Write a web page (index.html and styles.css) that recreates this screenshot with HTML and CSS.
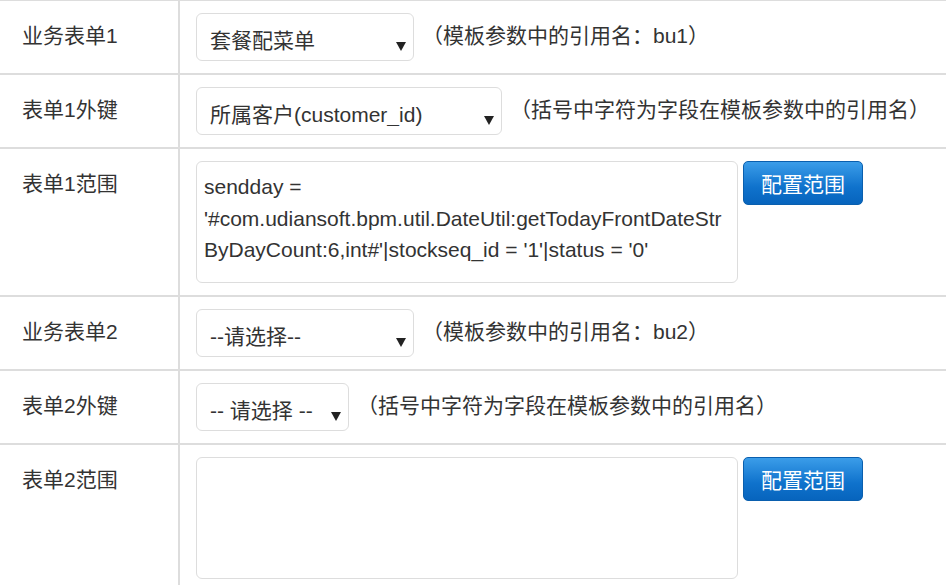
FILE: index.html
```html
<!DOCTYPE html>
<html lang="zh-CN">
<head>
  <meta charset="UTF-8">
  <title>业务表单配置</title>
  <link rel="stylesheet" href="styles.css">
</head>
<body>
  <table class="form-table">
    <tr>
      <td class="label">业务表单1</td>
      <td class="field">
        <div class="field-row">
          <span class="select-wrap w-short">
            <select class="select"><option>套餐配菜单</option></select>
          </span>
          <span class="hint">（模板参数中的引用名：bu1）</span>
        </div>
      </td>
    </tr>
    <tr>
      <td class="label">表单1外键</td>
      <td class="field">
        <div class="field-row">
          <span class="select-wrap w-long">
            <select class="select"><option>所属客户(customer_id)</option></select>
          </span>
          <span class="hint">（括号中字符为字段在模板参数中的引用名）</span>
        </div>
      </td>
    </tr>
    <tr>
      <td class="label">表单1范围</td>
      <td class="field">
        <div class="field-row top">
          <textarea class="range" readonly>sendday = '#com.udiansoft.bpm.util.DateUtil:getTodayFrontDateStrByDayCount:6,int#'|stockseq_id = '1'|status = '0'</textarea>
          <button class="btn">配置范围</button>
        </div>
      </td>
    </tr>
    <tr>
      <td class="label">业务表单2</td>
      <td class="field">
        <div class="field-row">
          <span class="select-wrap w-short">
            <select class="select"><option>--请选择--</option></select>
          </span>
          <span class="hint">（模板参数中的引用名：bu2）</span>
        </div>
      </td>
    </tr>
    <tr>
      <td class="label">表单2外键</td>
      <td class="field">
        <div class="field-row">
          <span class="select-wrap w-tiny">
            <select class="select"><option>-- 请选择 --</option></select>
          </span>
          <span class="hint">（括号中字符为字段在模板参数中的引用名）</span>
        </div>
      </td>
    </tr>
    <tr>
      <td class="label">表单2范围</td>
      <td class="field">
        <div class="field-row top">
          <textarea class="range" readonly></textarea>
          <button class="btn">配置范围</button>
        </div>
      </td>
    </tr>
  </table>
</body>
</html>
```

FILE: styles.css
```css
body {
  margin: 0;
  font-family: "Liberation Sans", "Noto Sans CJK SC", sans-serif;
  font-size: 21px;
  color: #333;
  background-color: #fff;
}
.form-table {
  width: 100%;
  border-collapse: separate;
  border-spacing: 0;
  border-top: 1px solid #ddd;
}
.form-table td {
  border-bottom: 2px solid #ddd;
  vertical-align: top;
}
.label {
  box-sizing: border-box;
  width: 181px;
  padding: 23px 0 0 22px;
  line-height: 24px;
  border-right: 2px solid #ddd;
  white-space: nowrap;
}
.field {
  padding: 12px 16px;
}
.field-row {
  display: flex;
  align-items: center;
}
.field-row.top {
  align-items: flex-start;
}
.select-wrap {
  position: relative;
  display: inline-block;
  flex: none;
}
/* dropdown arrow */
.select-wrap::after {
  content: "";
  position: absolute;
  right: 8px;
  top: 29px;
  border-left: 5px solid transparent;
  border-right: 5px solid transparent;
  border-top: 9px solid #222;
  pointer-events: none;
}
.w-short { width: 218px; }
.w-long { width: 306px; }
.w-tiny { width: 153px; }
.select {
  -webkit-appearance: none;
  appearance: none;
  box-sizing: border-box;
  width: 100%;
  height: 48px;
  padding: 6px 24px 0 13px;
  border: 1px solid #ddd;
  border-radius: 6px;
  background-color: #fff;
  font: inherit;
  color: #333;
  outline: none;
}
.hint {
  margin-left: 8px;
  margin-bottom: 2px;
  white-space: nowrap;
  line-height: 24px;
}
.range {
  box-sizing: border-box;
  width: 542px;
  height: 122px;
  padding: 9px 7px;
  border: 1px solid #ddd;
  border-radius: 6px;
  font: inherit;
  line-height: 1.5;
  color: #333;
  resize: none;
  overflow: hidden;
  outline: none;
}
.btn {
  flex: none;
  box-sizing: border-box;
  width: 120px;
  height: 44px;
  margin-left: 5px;
  padding: 0;
  border: 1px solid #0a5fae;
  border-radius: 5px;
  background: linear-gradient(#3b9de9, #0f72cc 60%, #0764bd);
  color: #fff;
  font: inherit;
  cursor: pointer;
}
```
